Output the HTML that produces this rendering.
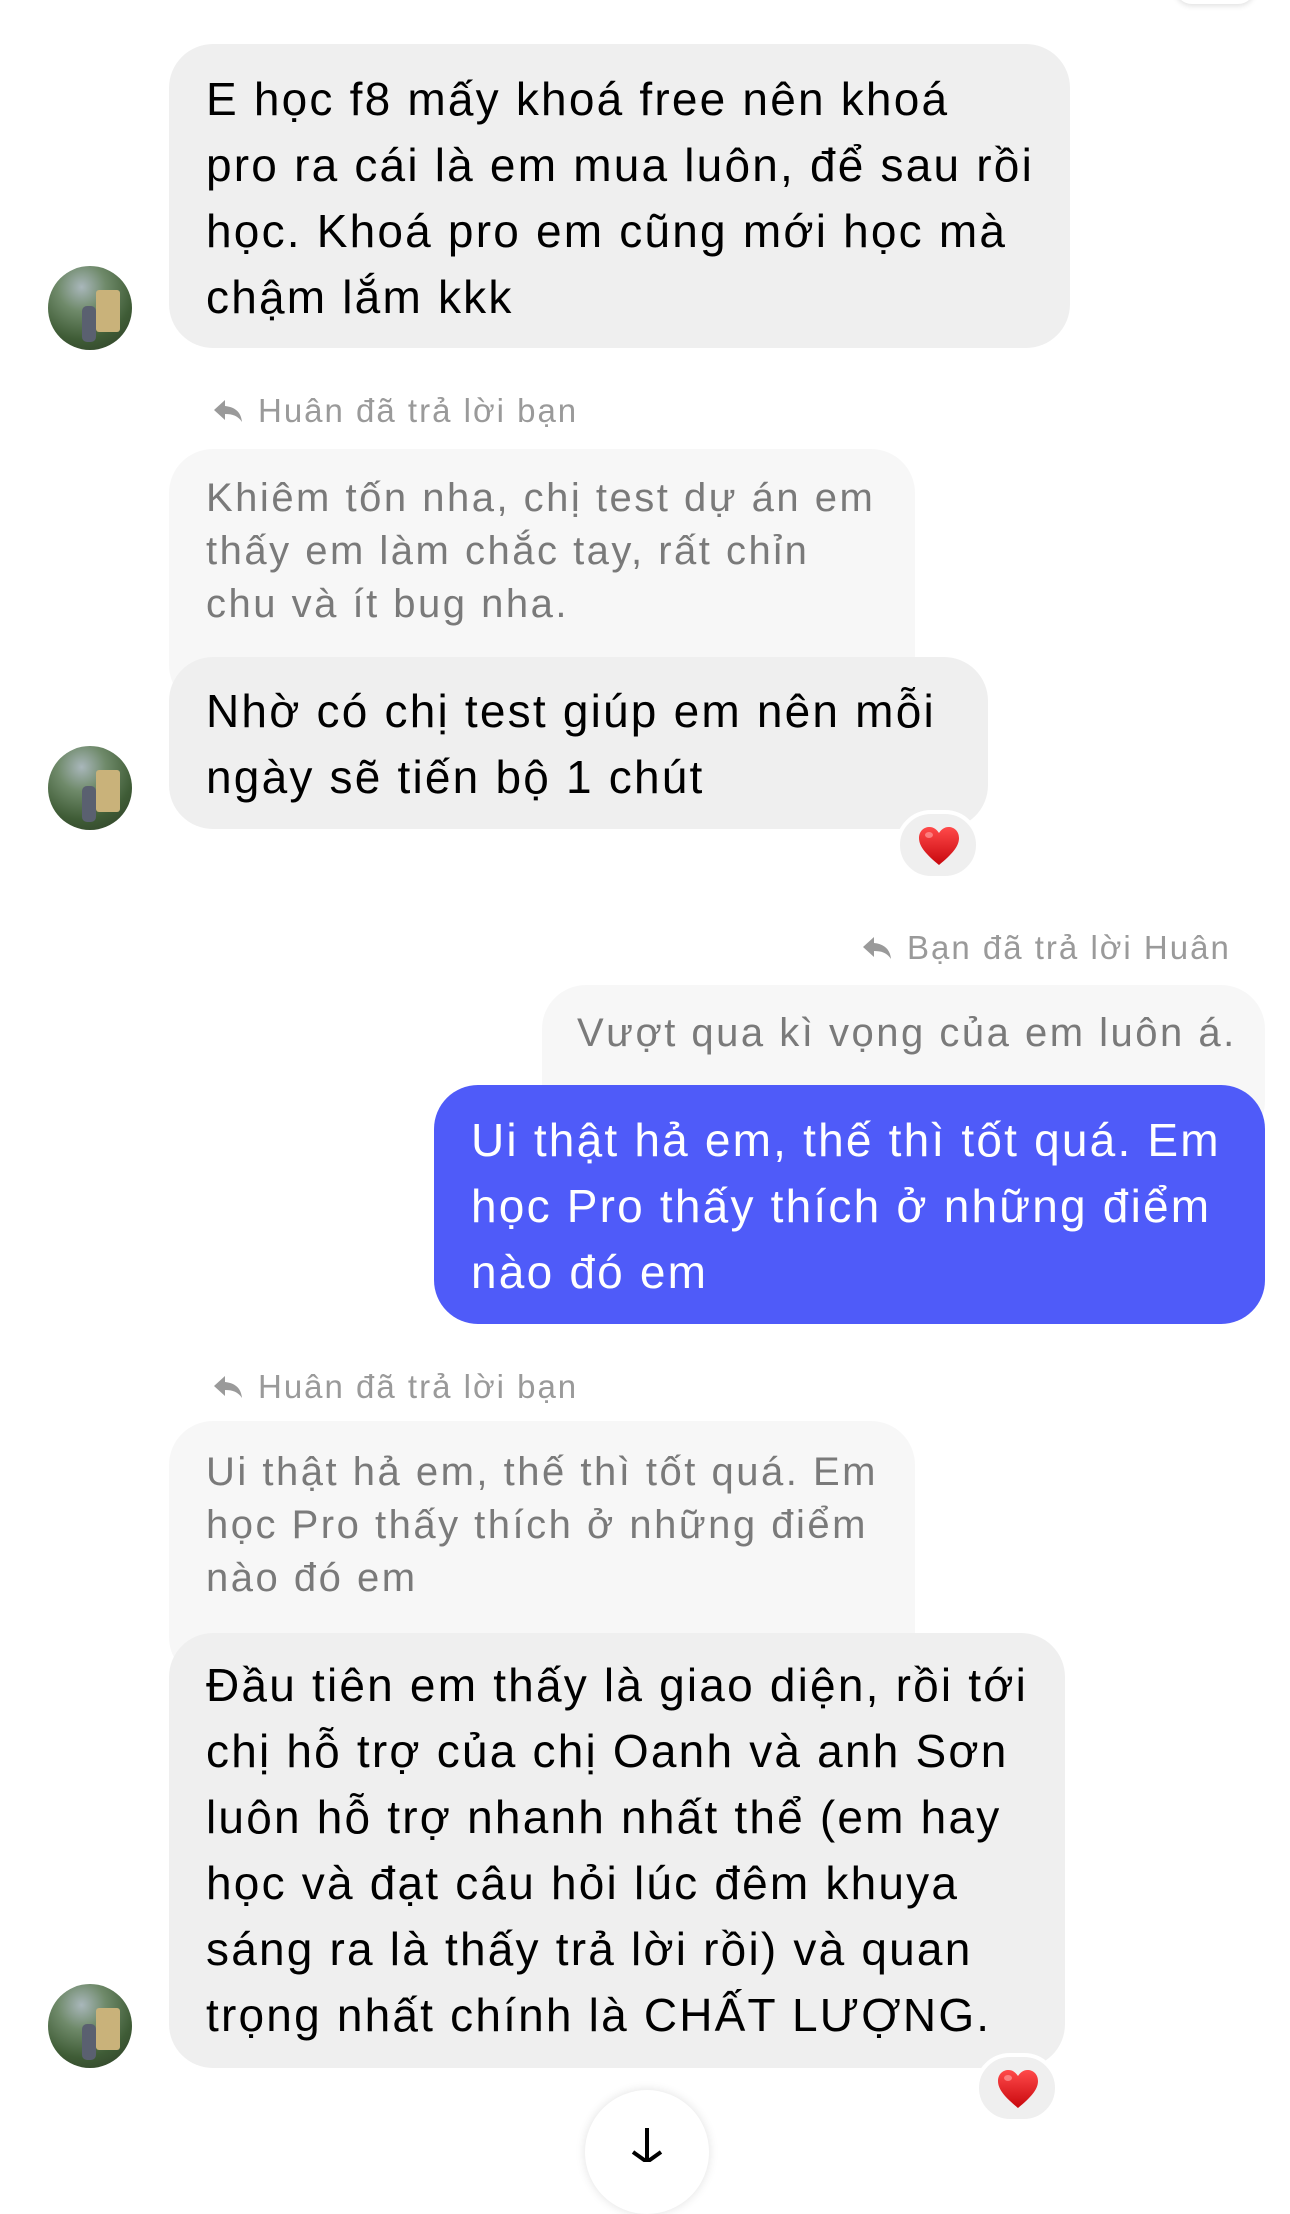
<!DOCTYPE html>
<html><head><meta charset="utf-8">
<style>
*{margin:0;padding:0;box-sizing:border-box}
body{width:1290px;height:2151px;background:#fff;position:relative;overflow:hidden;font-family:"Liberation Sans",sans-serif}
.b{position:absolute;border-radius:44px}
.g{background:#efefef}
.q{background:#f7f7f7}
.t{position:absolute;white-space:nowrap;font-size:46px;line-height:66px;color:#000;letter-spacing:2.2px}
.qt{position:absolute;white-space:nowrap;font-size:40px;line-height:53px;color:#7a7a7a;letter-spacing:2.5px}
.rl{position:absolute;white-space:nowrap;font-size:33px;line-height:40px;color:#9a9a9a;letter-spacing:2px}
.rl svg{position:absolute;top:7px}
.av{position:absolute;width:84px;height:84px;border-radius:50%;overflow:hidden;background:radial-gradient(circle at 40% 25%,#a9b7bb 0,#6f8a6a 30%,#3f5c36 65%,#2c3a26 100%)}
.av:after{content:"";position:absolute;left:48px;top:24px;width:24px;height:42px;background:#c9b27a;border-radius:3px}
.av:before{content:"";position:absolute;left:34px;top:40px;width:14px;height:36px;background:#5a6070;border-radius:5px;z-index:2}
.rx{position:absolute;width:84px;height:70px;border-radius:35px;background:#efefef;border:4px solid #fff}
.rx svg{position:absolute;left:17px;top:11px}
</style></head><body>
<div style="position:absolute;left:1175px;top:-30px;width:80px;height:34px;border-radius:20px;background:#fff;box-shadow:0 2px 6px rgba(0,0,0,.12)"></div>

<div class="b g" style="left:169px;top:44px;width:901px;height:304px"></div>
<div class="t" style="left:206px;top:66px">E học f8 mấy khoá free nên khoá<br>pro ra cái là em mua luôn, để sau rồi<br>học. Khoá pro em cũng mới học mà<br>chậm lắm kkk</div>
<div class="av" style="left:48px;top:266px"></div>

<div class="rl" style="left:258px;top:391px"><svg style="left:-46px" width="32" height="26" viewBox="0 0 32 26"><path d="M13 2 L2 12 L13 22 V16 C21 16 26 18 30 24 C29 14 23 9 13 8 Z" fill="#9a9a9a"/></svg>Huân đã trả lời bạn</div>

<div class="b q" style="left:169px;top:449px;width:746px;height:260px"></div>
<div class="qt" style="left:206px;top:472px">Khiêm tốn nha, chị test dự án em<br>thấy em làm chắc tay, rất chỉn<br>chu và ít bug nha.</div>
<div class="b g" style="left:169px;top:657px;width:819px;height:172px"></div>
<div class="t" style="left:206px;top:678px">Nhờ có chị test giúp em nên mỗi<br>ngày sẽ tiến bộ 1 chút</div>
<div class="av" style="left:48px;top:746px"></div>
<div class="rx" style="left:896px;top:810px"><svg width="44" height="42" viewBox="0 0 44 42"><defs><linearGradient id="h" x1="0" y1="0" x2="0" y2="1"><stop offset="0" stop-color="#ff4a4a"/><stop offset="1" stop-color="#c8070d"/></linearGradient></defs><path d="M22 40 C10 30 2 22 2 13 C2 6 7 2 12.5 2 C17 2 20 5 22 8 C24 5 27 2 31.5 2 C37 2 42 6 42 13 C42 22 34 30 22 40 Z" fill="url(#h)"/><ellipse cx="12" cy="10" rx="4" ry="3" fill="#ff9a9a" opacity=".7"/></svg></div>

<div class="rl" style="left:907px;top:928px"><svg style="left:-46px" width="32" height="26" viewBox="0 0 32 26"><path d="M13 2 L2 12 L13 22 V16 C21 16 26 18 30 24 C29 14 23 9 13 8 Z" fill="#9a9a9a"/></svg>Bạn đã trả lời Huân</div>
<div class="b q" style="left:542px;top:985px;width:723px;height:160px"></div>
<div class="qt" style="left:577px;top:1007px">Vượt qua kì vọng của em luôn á.</div>
<div class="b" style="left:434px;top:1085px;width:831px;height:239px;background:#4f5bf9"></div>
<div class="t" style="left:471px;top:1107px;color:#fff">Ui thật hả em, thế thì tốt quá. Em<br>học Pro thấy thích ở những điểm<br>nào đó em</div>

<div class="rl" style="left:258px;top:1367px"><svg style="left:-46px" width="32" height="26" viewBox="0 0 32 26"><path d="M13 2 L2 12 L13 22 V16 C21 16 26 18 30 24 C29 14 23 9 13 8 Z" fill="#9a9a9a"/></svg>Huân đã trả lời bạn</div>
<div class="b q" style="left:169px;top:1421px;width:746px;height:260px"></div>
<div class="qt" style="left:206px;top:1446px">Ui thật hả em, thế thì tốt quá. Em<br>học Pro thấy thích ở những điểm<br>nào đó em</div>
<div class="b g" style="left:169px;top:1633px;width:896px;height:435px"></div>
<div class="t" style="left:206px;top:1652px">Đầu tiên em thấy là giao diện, rồi tới<br>chị hỗ trợ của chị Oanh và anh Sơn<br>luôn hỗ trợ nhanh nhất thể (em hay<br>học và đạt câu hỏi lúc đêm khuya<br>sáng ra là thấy trả lời rồi) và quan<br>trọng nhất chính là CHẤT LƯỢNG.</div>
<div class="av" style="left:48px;top:1984px"></div>
<div class="rx" style="left:975px;top:2053px"><svg width="44" height="42" viewBox="0 0 44 42"><path d="M22 40 C10 30 2 22 2 13 C2 6 7 2 12.5 2 C17 2 20 5 22 8 C24 5 27 2 31.5 2 C37 2 42 6 42 13 C42 22 34 30 22 40 Z" fill="url(#h)"/><ellipse cx="12" cy="10" rx="4" ry="3" fill="#ff9a9a" opacity=".7"/></svg></div>

<div style="position:absolute;left:585px;top:2090px;width:124px;height:124px;border-radius:50%;background:#fff;box-shadow:0 0 10px rgba(0,0,0,.12)"></div>
<svg style="position:absolute;left:622px;top:2128px" width="50" height="34" viewBox="0 0 50 34"><path d="M25 0 V34 M11 24 L25 34 L39 24" stroke="#000" stroke-width="4" fill="none"/></svg>
</body></html>
